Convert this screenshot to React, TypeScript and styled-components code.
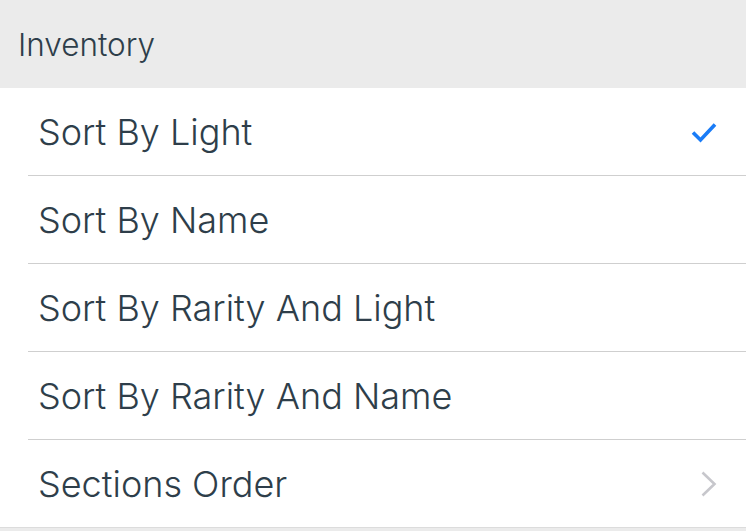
import React from "react";
import styled, { createGlobalStyle } from "styled-components";

const GlobalStyle = createGlobalStyle`
  html, body {
    margin: 0;
    padding: 0;
    background: #ebebeb;
  }
  body {
    font-family: Inter, "Noto Sans", sans-serif;
    -webkit-font-smoothing: antialiased;
  }
`;

// Page wrapper.
const Page = styled.div`
  width: 746px;
  height: 531px;
  background: #ebebeb;
  display: flex;
  flex-direction: column;
`;

// Gray section header.
const SectionHeader = styled.div`
  height: 88px;
  display: flex;
  align-items: center;
  padding-left: 18px;
  font-size: 31.5px;
  font-weight: 300;
  color: #2e3e4a;
`;

// White list.
const List = styled.ul`
  list-style: none;
  margin: 0;
  padding: 0 0 0 28px;
  background: #fff;
  border-bottom: 1px solid #dcdcdc;
`;

interface RowProps {
  last?: boolean;
}

// A single option row.
const Row = styled.li<RowProps>`
  height: 87px;
  display: flex;
  align-items: center;
  justify-content: space-between;
  padding: 0 29px 0 10px;
  border-bottom: ${({ last }) => (last ? "none" : "1px solid #cfcfcf")};
  font-size: 36px;
  font-weight: 300;
  color: #2e3e4a;
`;

const Check = () => (
  <svg width="26" height="22" viewBox="0 0 26 22">
    <path
      d="M2 11.5 L9.5 19 L24 3.5"
      fill="none"
      stroke="#1a7cf7"
      strokeWidth="3.6"
    />
  </svg>
);

const Chevron = () => (
  <svg width="16" height="26" viewBox="0 0 16 26">
    <path
      d="M1.5 1.5 L13.5 13 L1.5 24.5"
      fill="none"
      stroke="#c7c7cc"
      strokeWidth="2.6"
    />
  </svg>
);

const items = [
  { label: "Sort By Light", accessory: "check" },
  { label: "Sort By Name" },
  { label: "Sort By Rarity And Light" },
  { label: "Sort By Rarity And Name" },
  { label: "Sections Order", accessory: "chevron" },
];

const App = () => {
  return (
    <Page>
      <GlobalStyle />
      <SectionHeader>Inventory</SectionHeader>
      <List>
        {items.map((item, i) => (
          <Row key={item.label} last={i === items.length - 1}>
            <span>{item.label}</span>
            {item.accessory === "check" && <Check />}
            {item.accessory === "chevron" && <Chevron />}
          </Row>
        ))}
      </List>
    </Page>
  );
};

export default App;
